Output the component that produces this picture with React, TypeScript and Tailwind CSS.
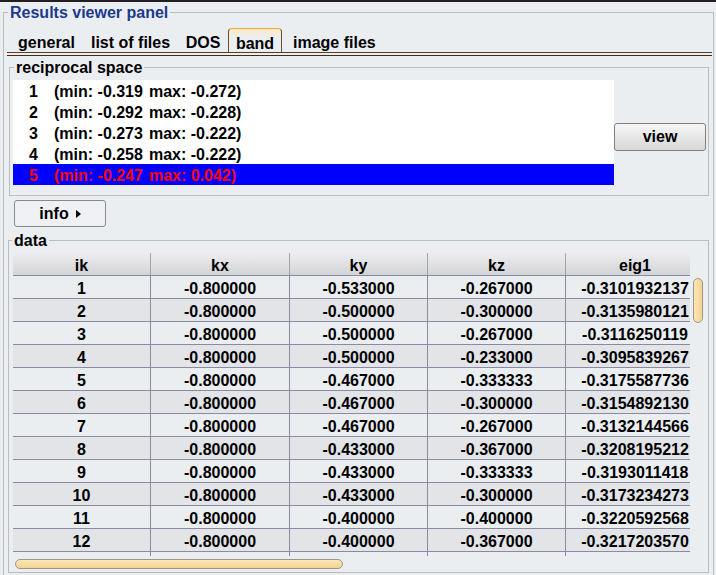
import React from "react";

const font = "font-['Liberation_Sans',Arial,sans-serif] font-bold text-[16px]";

const bands = [
  { n: 1, min: "-0.319", max: "-0.272" },
  { n: 2, min: "-0.292", max: "-0.228" },
  { n: 3, min: "-0.273", max: "-0.222" },
  { n: 4, min: "-0.258", max: "-0.222" },
  { n: 5, min: "-0.247", max: "0.042" },
];

const rows = [
  ["1", "-0.800000", "-0.533000", "-0.267000", "-0.3101932137"],
  ["2", "-0.800000", "-0.500000", "-0.300000", "-0.3135980121"],
  ["3", "-0.800000", "-0.500000", "-0.267000", "-0.3116250119"],
  ["4", "-0.800000", "-0.500000", "-0.233000", "-0.3095839267"],
  ["5", "-0.800000", "-0.467000", "-0.333333", "-0.3175587736"],
  ["6", "-0.800000", "-0.467000", "-0.300000", "-0.3154892130"],
  ["7", "-0.800000", "-0.467000", "-0.267000", "-0.3132144566"],
  ["8", "-0.800000", "-0.433000", "-0.367000", "-0.3208195212"],
  ["9", "-0.800000", "-0.433000", "-0.333333", "-0.3193011418"],
  ["10", "-0.800000", "-0.433000", "-0.300000", "-0.3173234273"],
  ["11", "-0.800000", "-0.400000", "-0.400000", "-0.3220592568"],
  ["12", "-0.800000", "-0.400000", "-0.367000", "-0.3217203570"],
  ["", "", "", "", ""],
];

const colWidths = ["w-[138px]", "w-[139px]", "w-[138px]", "w-[138px]", "w-[138px]"];
const headers = ["ik", "kx", "ky", "kz", "eig1"];

const tabs = [
  { label: "general", cls: "w-[73px] justify-center" },
  { label: "list of files", cls: "w-[95px] justify-center" },
  { label: "DOS", cls: "w-[50px] justify-center" },
  { label: "band", cls: "w-[54px] justify-center", active: true },
  { label: "image files", cls: "pl-[11px]" },
];

export default function App() {
  return (
    <div className={`w-[716px] h-[575px] overflow-hidden bg-[#ebeef1] text-black ${font}`}>
      <div className="h-[2px] bg-[#231f20]" />

      <fieldset className="mt-px ml-[3px] w-[711px] h-[600px] border border-[#bdbdbd]">
        <legend className="ml-[4px] px-[2px] pt-[2px] leading-[16px] text-[#1b3a8c]">
          Results viewer panel
        </legend>

        {/* tab strip */}
        <div className="mt-[7px] ml-[3px] mr-[1px] h-[25px] flex pl-[3px] border-b border-[#5e3b1f]">
          {tabs.map((t) => (
            <div
              key={t.label}
              className={`h-[24px] flex pt-[5px] leading-[19px] whitespace-nowrap ${t.cls} ${
                t.active
                  ? "border-x border-t border-x-[#6b4b2b] border-t-[#e9a94a] rounded-t-[4px] bg-linear-to-b from-[#fde9bd] via-[#ebeef1] via-[35%] to-[#ebeef1]"
                  : ""
              }`}
            >
              {t.label}
            </div>
          ))}
        </div>

        {/* tab pane */}
        <div className="mt-[2px] ml-[3px] mr-[1px] border-t border-[#3f2c1c]">
          <fieldset className="mt-[3px] ml-[2px] mr-[3px] border border-[#bdbdbd] pt-[4px] pb-[10px]">
            <legend className="ml-[4px] pl-[2px] pr-[2px] pt-px leading-[16px]">reciprocal space</legend>
            <div className="flex items-start">
              <div className="ml-[3px] w-[601px] h-[105px] bg-white">
                {bands.map((b) => {
                  const sel = b.n === 5;
                  return (
                    <div
                      key={b.n}
                      className={`h-[21px] flex pl-[16px] pt-[2px] leading-[19px] whitespace-nowrap ${
                        sel ? "bg-[#0000ff] text-[#ff0000]" : ""
                      }`}
                    >
                      <span className="w-[25px]">{b.n}</span>
                      <span>(min: {b.min}</span>
                      <span className="ml-[6px]">max: {b.max})</span>
                    </div>
                  );
                })}
              </div>
              <button className="ml-auto mr-[2px] mt-[43px] w-[92px] h-[28px] flex items-center justify-center border border-[#808080] rounded-[3px] bg-linear-to-b from-[#f6f6f6] to-[#d8d8d8] leading-[20px]">
                view
              </button>
            </div>
          </fieldset>

          <button className="mt-[4px] ml-[7px] w-[92px] h-[27px] flex items-center justify-center gap-[7px] pt-px border border-[#8a8a8a] rounded-[3px] bg-[#eef0f3] leading-[20px]">
            <span>info</span>
            <svg width="5" height="8" viewBox="0 0 5 8">
              <polygon points="0,0 5,4 0,8" fill="#000" />
            </svg>
          </button>

          <fieldset className="mt-[5px] ml-[1px] mr-[3px] border border-[#bdbdbd] pt-[4px]">
            <legend className="ml-[3px] pl-[2px] pr-[2px] pt-px leading-[16px]">data</legend>
            <div className="ml-[4px] flex">
              <div className="w-[677px]">
                <div className="w-[677px] overflow-hidden">
                  <div className="flex w-[700px] h-[23px] border-b border-[#8a8aa3] bg-linear-to-b from-[#ededef] to-[#d3d4d7]">
                    {headers.map((h, i) => (
                      <div
                        key={h}
                        className={`${colWidths[i]} shrink-0 text-center pt-[3px] leading-[19px] ${
                          i < 4 ? "border-r border-[#a3a3ad]" : ""
                        }`}
                      >
                        {h}
                      </div>
                    ))}
                  </div>
                  <div className="h-[280px] overflow-hidden">
                    {rows.map((r, ri) => (
                      <div
                        key={ri}
                        className={`flex w-[700px] h-[23px] border-b border-[#8a8aa3] ${
                          ri % 2 === 1 ? "bg-[#e2e4e8]" : "bg-[#ebeef1]"
                        }`}
                      >
                        {r.map((c, ci) => (
                          <div
                            key={ci}
                            className={`${colWidths[ci]} shrink-0 text-center pt-[3px] leading-[19px] ${
                              ci < 4 ? "border-r border-[#8a8aa3]" : ""
                            }`}
                          >
                            {c}
                          </div>
                        ))}
                      </div>
                    ))}
                  </div>
                </div>
                <div className="h-[16px] pt-[3px]">
                  <div className="ml-[2px] w-[328px] h-[10px] rounded-[5px] border border-[#9c978c] bg-linear-to-b from-[#fbe6b6] to-[#f4d38f]" />
                </div>
              </div>
              <div className="w-[18px] pt-[25px]">
                <div className="ml-[3px] w-[10px] h-[45px] rounded-[5px] border border-[#9c978c] bg-linear-to-r from-[#fbe6b6] to-[#f4d38f]" />
              </div>
            </div>
          </fieldset>
        </div>
      </fieldset>
    </div>
  );
}
